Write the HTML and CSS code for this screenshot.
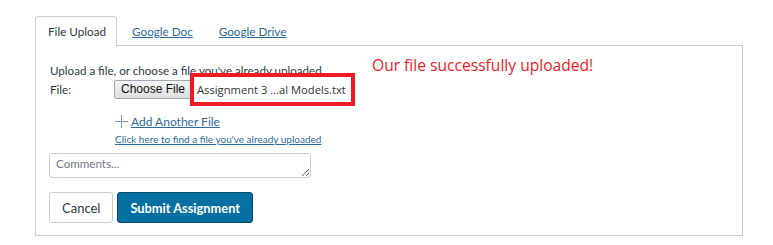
FILE: index.html
```html
<!DOCTYPE html>
<html>
<head>
  <meta charset="UTF-8">
  <title>Submit Assignment</title>
  <link rel="stylesheet" href="styles.css">
</head>
<body>
  <div class="submit-wrap">
    <ul class="tabs">
      <li class="tab active">File Upload</li>
      <li class="tab"><a href="#">Google Doc</a></li>
      <li class="tab"><a href="#">Google Drive</a></li>
    </ul>
    <div class="panel">
      <div class="note">Our file successfully uploaded!</div>
      <p class="intro">Upload a file, or choose a file you've already uploaded.</p>
      <div class="file-row">
        <span class="file-label">File:</span>
        <span class="choose-btn">Choose File</span>
        <span class="file-name">Assignment 3 ...al Models.txt</span>
      </div>
      <div class="links">
        <a href="#" class="add-file">
          <svg class="plus" width="13" height="13" viewBox="0 0 13 13"><path d="M6.5 0v13M0 6.5h13" stroke="#7d9cb8" stroke-width="1"/></svg>
          <span>Add Another File</span>
        </a>
        <a href="#" class="find-file">Click here to find a file you've already uploaded</a>
      </div>
      <textarea class="comments" placeholder="Comments..."></textarea>
      <div class="actions">
        <button class="btn">Cancel</button>
        <button class="btn btn-primary">Submit Assignment</button>
      </div>
    </div>
  </div>
</body>
</html>
```

FILE: styles.css
```css
body {
  margin: 0;
  font-family: Lato, "Noto Sans", sans-serif;
  color: #2d3b45;
  background: #fff;
}

.submit-wrap {
  padding: 16px 0 0 35px;
  width: 708px;
}

.tabs {
  display: flex;
  list-style: none;
  margin: 0;
  padding: 0;
}

.tab {
  height: 28px;
  line-height: 28px;
  padding: 0 10px 0 14px;
  font-size: 11.7px;
  border: 1px solid transparent;
  border-bottom: none;
}

.tab a {
  color: #2d6b9e;
  text-decoration: underline;
}

.tab.active {
  padding: 0 10px 0 12px;
  border-color: #c7cdd1;
  border-radius: 4px 4px 0 0;
  background: #fff;
  margin-bottom: -1px;
  height: 29px;
  position: relative;
  z-index: 1;
}

.panel {
  position: relative;
  border: 1px solid #c7cdd1;
  height: 191px;
  padding: 0 0 0 14px;
  box-sizing: border-box;
}

/* annotation on top of the screenshot */
.note {
  position: absolute;
  left: 336px;
  top: 8px;
  color: #ed1c24;
  font-family: "Open Sans", sans-serif;
  font-size: 15.6px;
}

.intro {
  margin: 0;
  padding-top: 17px;
  font-size: 11.6px;
  line-height: 16px;
}

.file-row {
  display: flex;
  align-items: center;
  margin-top: -6px;
  font-size: 11.6px;
}

.file-label {
  width: 64px;
}

.choose-btn {
  font-family: "Liberation Sans", Arial, sans-serif;
  font-size: 12px;
  color: #111;
  padding: 0 6px;
  height: 17px;
  line-height: 17px;
  background: linear-gradient(#f4f4f4, #dedede);
  border: 1px solid #9fa8b4;
  border-radius: 2px;
}

.file-name {
  margin-left: -2px;
  border: 4px solid #ed1c24;
  padding: 0 5px 0 3px;
  height: 25px;
  line-height: 25px;
  font-family: "Open Sans", sans-serif;
  font-size: 11.2px;
  color: #333;
}

.links {
  display: flex;
  flex-direction: column;
  align-items: flex-start;
  margin: 8px 0 0 65px;
}

.add-file {
  display: flex;
  align-items: center;
  gap: 3px;
  color: #2d6b9e;
  font-size: 12px;
}

.add-file span {
  text-decoration: underline;
}

.find-file {
  margin-top: 4px;
  color: #2d6b9e;
  font-size: 10px;
}

.comments {
  display: block;
  margin: 8px 0 0 -1px;
  width: 262px;
  height: 25px;
  box-sizing: border-box;
  border: 1px solid #c7cdd1;
  border-radius: 3px;
  padding: 3px 6px;
  font-family: Lato, sans-serif;
  font-size: 11.6px;
  resize: vertical;
}

.comments::placeholder {
  color: #6f7a82;
}

.actions {
  display: flex;
  gap: 4px;
  margin: 14px 0 0 -1px;
}

.btn {
  height: 31px;
  padding: 0 12px;
  font-family: Lato, sans-serif;
  font-size: 13px;
  color: #2d3b45;
  background: #fff;
  border: 1px solid #c7cdd1;
  border-radius: 3px;
  cursor: pointer;
}

.btn-primary {
  background: #0770a3;
  border-color: #0a4a6a;
  color: #fff;
  font-weight: bold;
  font-size: 12.8px;
}
```
